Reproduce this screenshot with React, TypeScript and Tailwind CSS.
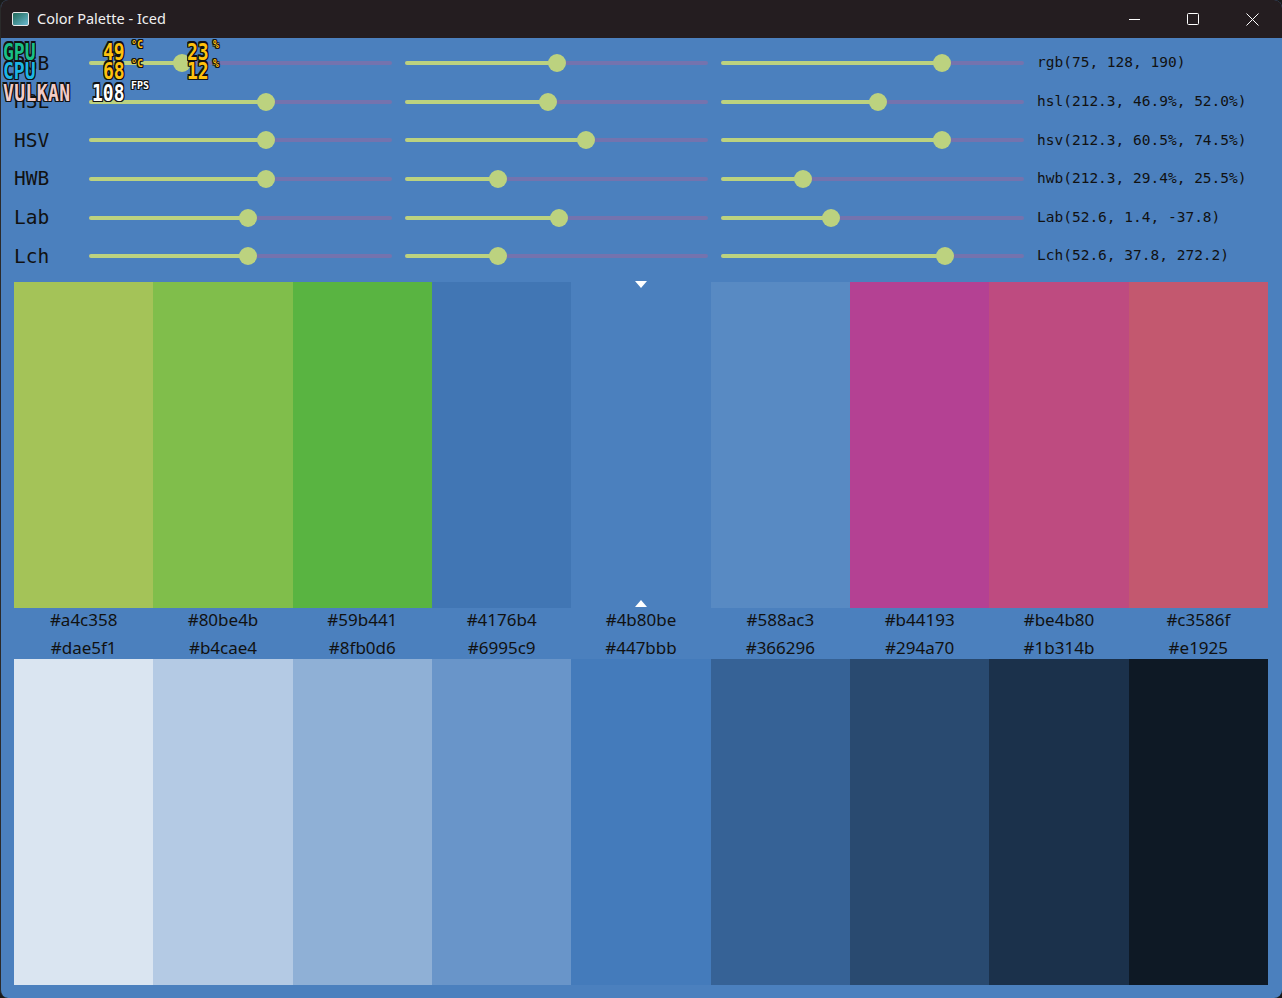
import React from 'react';

const mono = "font-['DejaVu_Sans_Mono','Liberation_Mono',monospace]";
const sans = "font-['Noto_Sans','Open_Sans',sans-serif]";

const TRACK_W = 303;
const R = 9;

const rows = [
  { label: 'RGB', values: [75 / 255, 128 / 255, 190 / 255], text: 'rgb(75, 128, 190)' },
  { label: 'HSL', values: [212.3 / 360, 0.469, 0.52], text: 'hsl(212.3, 46.9%, 52.0%)' },
  { label: 'HSV', values: [212.3 / 360, 0.605, 0.745], text: 'hsv(212.3, 60.5%, 74.5%)' },
  { label: 'HWB', values: [212.3 / 360, 0.294, 0.255], text: 'hwb(212.3, 29.4%, 25.5%)' },
  { label: 'Lab', values: [0.526, 129.4 / 255, 90.2 / 255], text: 'Lab(52.6, 1.4, -37.8)' },
  { label: 'Lch', values: [0.526, 37.8 / 128, 272.2 / 360], text: 'Lch(52.6, 37.8, 272.2)' },
];

const top = [
  { c: '#a4c358' }, { c: '#80be4b' }, { c: '#59b441' }, { c: '#4176b4' }, { c: '#4b80be' },
  { c: '#588ac3' }, { c: '#b44193' }, { c: '#be4b80' }, { c: '#c3586f' },
];

const bottom = [
  { c: '#dae5f1', l: '#dae5f1' }, { c: '#b4cae4', l: '#b4cae4' }, { c: '#8fb0d6', l: '#8fb0d6' },
  { c: '#6995c9', l: '#6995c9' }, { c: '#447bbb', l: '#447bbb' }, { c: '#366296', l: '#366296' },
  { c: '#294a70', l: '#294a70' }, { c: '#1b314b', l: '#1b314b' }, { c: '#0e1925', l: '#e1925' },
];

const Slider = ({ value }: { value: number }) => {
  const center = R + value * (TRACK_W - 2 * R);
  return (
    <div className="relative w-[303px] h-[18px] shrink-0">
      <div className="absolute left-0 right-0 top-[7px] h-[4px] rounded-full bg-[#7473ae]" />
      <div className="absolute left-0 top-[7px] h-[4px] rounded-full bg-[#bcd27f]" style={{ width: center }} />
      <div className="absolute top-0 w-[18px] h-[18px] rounded-full bg-[#bcd27f]" style={{ left: center - R }} />
    </div>
  );
};

const outline = '[text-shadow:1px_0_#111,-1px_0_#111,0_1px_#111,0_-1px_#111,1px_1px_#111,-1px_-1px_#111,1px_-1px_#111,-1px_1px_#111]';

const Overlay = () => (
  <div className={`absolute left-[2px] top-[38px] w-[230px] h-[64px] ${mono} font-bold leading-none ${outline}`}>
    <span className="absolute left-0 top-[2px] text-[18px] text-[#19c088] scale-y-[1.3] origin-top-left">GPU</span>
    <span className="absolute left-[100px] top-[2px] text-[18px] text-[#ffc20e] scale-y-[1.3] origin-top-left">49</span>
    <span className="absolute left-[128px] top-[2px] text-[10px] text-[#ffc20e]">°C</span>
    <span className="absolute left-[184px] top-[2px] text-[18px] text-[#ffc20e] scale-y-[1.3] origin-top-left">23</span>
    <span className="absolute left-[210px] top-[2px] text-[10px] text-[#ffc20e]">%</span>
    <span className="absolute left-0 top-[21px] text-[18px] text-[#1cb6e6] scale-y-[1.3] origin-top-left">CPU</span>
    <span className="absolute left-[100px] top-[21px] text-[18px] text-[#ffc20e] scale-y-[1.3] origin-top-left">68</span>
    <span className="absolute left-[128px] top-[21px] text-[10px] text-[#ffc20e]">°C</span>
    <span className="absolute left-[184px] top-[21px] text-[18px] text-[#ffc20e] scale-y-[1.3] origin-top-left">12</span>
    <span className="absolute left-[210px] top-[21px] text-[10px] text-[#ffc20e]">%</span>
    <span className="absolute left-0 top-[43px] text-[18px] text-[#f2cbc6] scale-y-[1.3] origin-top-left tracking-[0.4px]">VULKAN</span>
    <span className="absolute left-[89px] top-[43px] text-[18px] text-white scale-y-[1.3] origin-top-left">108</span>
    <span className="absolute left-[128px] top-[43px] text-[10px] text-white">FPS</span>
  </div>
);

const TitleBar = () => (
  <div className="h-[38px] shrink-0 bg-[#241d20] flex items-center">
    <div className="ml-[11px] w-[17px] h-[14px] border-[1.5px] border-[#e8e8e8] rounded-[2px] bg-gradient-to-br from-[#1f6a5a] to-[#6ab8d0]" />
    <span className={`ml-[8px] text-[14.5px] text-[#f0f0f0] ${sans}`}>Color Palette - Iced</span>
    <div className="ml-auto flex items-center h-full">
      <div className="w-[58px] h-full flex items-center justify-center">
        <svg width="12" height="12" viewBox="0 0 12 12"><path d="M0 6.5h11" stroke="#ffffff" strokeWidth="1" /></svg>
      </div>
      <div className="w-[58px] h-full flex items-center justify-center">
        <svg width="12" height="12" viewBox="0 0 12 12"><rect x="0.5" y="0.5" width="11" height="11" rx="1" fill="none" stroke="#ffffff" strokeWidth="1" /></svg>
      </div>
      <div className="w-[60px] h-full flex items-center justify-center">
        <svg width="13" height="13" viewBox="0 0 13 13"><path d="M0.5 0.5l12 12M12.5 0.5l-12 12" stroke="#ffffff" strokeWidth="1" /></svg>
      </div>
    </div>
  </div>
);

const App = () => {
  return (
    <div className="w-[1282px] h-[998px] bg-[#1a1a1a]">
      <div className="relative w-full h-full rounded-[8px] overflow-hidden flex flex-col bg-[#4b80be] border-l border-[#2a2a2a]">
        <TitleBar />
        <div className="flex-1 flex flex-col pl-[13px] pr-[14px]">
          <div className="pt-[6px] flex flex-col">
            {rows.map((row) => (
              <div key={row.label} className="h-[38.6px] flex items-center gap-[13px]">
                <span className={`w-[62px] shrink-0 text-[19.5px] leading-none text-[#111] ${mono}`}>{row.label}</span>
                {row.values.map((v, i) => (
                  <Slider key={i} value={v} />
                ))}
                <span className={`text-[14.5px] text-[#111] ${mono} whitespace-pre`}>{row.text}</span>
              </div>
            ))}
          </div>

          <div className="mt-[6.4px] grid grid-cols-9">
            {top.map((s, i) => (
              <div key={s.c} className="flex flex-col">
                <div className="relative h-[326px]" style={{ backgroundColor: s.c }}>
                  {i === 4 && (
                    <>
                      <div className="absolute left-1/2 -translate-x-1/2 top-[-1px] w-0 h-0 border-l-[6.5px] border-r-[6.5px] border-t-[7px] border-l-transparent border-r-transparent border-t-white" />
                      <div className="absolute left-1/2 -translate-x-1/2 bottom-[1px] w-0 h-0 border-l-[6.5px] border-r-[6.5px] border-b-[7px] border-l-transparent border-r-transparent border-b-white" />
                    </>
                  )}
                </div>
                <div className={`h-[25.5px] pb-[1px] flex items-center justify-center text-[17px] text-[#111] ${sans}`}>{s.c}</div>
              </div>
            ))}
          </div>

          <div className="grid grid-cols-9">
            {bottom.map((s) => (
              <div key={s.c} className="flex flex-col">
                <div className={`h-[25.5px] pt-[3px] flex items-center justify-center text-[17px] text-[#111] ${sans}`}>{s.l}</div>
                <div className="h-[326px]" style={{ backgroundColor: s.c }} />
              </div>
            ))}
          </div>
        </div>
        <Overlay />
      </div>
    </div>
  );
};

export default App;
